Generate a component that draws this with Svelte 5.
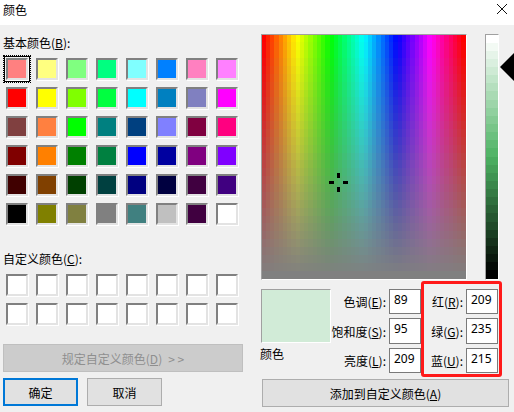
<script>
  import { onMount } from "svelte";

  const basic = [
    "#ff8080", "#ffff80", "#80ff80", "#00ff80", "#80ffff", "#0080ff", "#ff80c0", "#ff80ff",
    "#ff0000", "#ffff00", "#80ff00", "#00ff40", "#00ffff", "#0080c0", "#8080c0", "#ff00ff",
    "#804040", "#ff8040", "#00ff00", "#008080", "#004080", "#8080ff", "#800040", "#ff0080",
    "#800000", "#ff8000", "#008000", "#008040", "#0000ff", "#0000a0", "#800080", "#8000ff",
    "#400000", "#804000", "#004000", "#004040", "#000080", "#000040", "#400040", "#400080",
    "#000000", "#808000", "#808040", "#808080", "#408080", "#c0c0c0", "#400040", "#ffffff"
  ];
  const custom = Array(16).fill("#ffffff");
  const hsl = [
    { label: "色调", key: "E", value: 89 },
    { label: "饱和度", key: "S", value: 95 },
    { label: "亮度", key: "L", value: 209 }
  ];
  const rgb = [
    { label: "红", key: "R", value: 209 },
    { label: "绿", key: "G", value: 235 },
    { label: "蓝", key: "U", value: 215 }
  ];

  let spectrum;
  let ramp;

  function hslColor(h, s, l) {
    return `hsl(${h} ${s}% ${l}%)`;
  }

  onMount(() => {
    // spectrum, blocky like the real dialog
    const ctx = spectrum.getContext("2d");
    const cols = 48;
    const rows = 31;
    for (let c = 0; c < cols; c++) {
      for (let r = 0; r < rows; r++) {
        ctx.fillStyle = hslColor((c / (cols - 1)) * 360, 100 - (r / (rows - 1)) * 100, 50);
        const x = Math.floor((c * spectrum.width) / cols);
        const y = Math.floor((r * spectrum.height) / rows);
        ctx.fillRect(x, y, spectrum.width, spectrum.height);
      }
    }

    // luminance ramp for the current hue and saturation
    const rctx = ramp.getContext("2d");
    const steps = 30;
    for (let i = 0; i < steps; i++) {
      rctx.fillStyle = hslColor(133, 40, 100 - (i / (steps - 1)) * 100);
      rctx.fillRect(0, Math.floor((i * ramp.height) / steps), ramp.width, ramp.height);
    }
  });
</script>

<div class="dialog">
  <header class="titlebar">
    <span>颜色</span>
    <svg class="close" width="12" height="12" viewBox="0 0 12 12">
      <path d="M1 1 L11 11 M11 1 L1 11" stroke="#111" stroke-width="1" fill="none" />
    </svg>
  </header>

  <div class="content">
    <section class="left">
      <p class="caption">基本颜色(<u>B</u>):</p>
      <div class="grid">
        {#each basic as color, i}
          <div class="cell" class:active={i === 0}>
            <div class="swatch" style="background: {color}"></div>
          </div>
        {/each}
      </div>

      <p class="caption custom-caption">自定义颜色(<u>C</u>):</p>
      <div class="grid custom">
        {#each custom as color}
          <div class="cell">
            <div class="swatch" style="background: {color}"></div>
          </div>
        {/each}
      </div>

      <button class="btn define" disabled>规定自定义颜色(<u>D</u>)<span class="more">&gt; &gt;</span></button>
      <div class="actions">
        <button class="btn primary">确定</button>
        <button class="btn">取消</button>
      </div>
    </section>

    <section class="right">
      <div class="pickers">
        <div class="spectrum">
          <canvas bind:this={spectrum} width="204" height="244"></canvas>
          <div class="cross">
            <i class="v t"></i><i class="v b"></i><i class="h l"></i><i class="h r"></i>
          </div>
        </div>
        <div class="ramp">
          <canvas bind:this={ramp} width="12" height="244"></canvas>
        </div>
        <div class="arrow"></div>
      </div>

      <div class="values">
        <div class="preview-col">
          <div class="preview"></div>
          <span class="preview-label">颜色</span>
        </div>
        <div class="fields">
          {#each hsl as f}
            <label class="field">
              <span>{f.label}(<u>{f.key}</u>):</span>
              <span class="input">{f.value}</span>
            </label>
          {/each}
        </div>
        <div class="fields rgb">
          {#each rgb as f}
            <label class="field">
              <span>{f.label}(<u>{f.key}</u>):</span>
              <span class="input">{f.value}</span>
            </label>
          {/each}
        </div>
      </div>

      <button class="btn add">添加到自定义颜色(<u>A</u>)</button>
    </section>
  </div>
</div>

<style>
  :global(body) {
    margin: 0;
    background: #f0f0f0;
  }

  .dialog {
    width: 514px;
    height: 412px;
    overflow: hidden;
    background: #f0f0f0;
    color: #000;
    font-family: "Noto Sans CJK SC", "Noto Sans", sans-serif;
    font-size: 12px;
  }

  .titlebar {
    height: 25px;
    box-sizing: border-box;
    background: #fff;
    display: flex;
    align-items: flex-start;
    justify-content: space-between;
    padding: 0 6px 0 3px;
    line-height: 20px;
  }

  .close {
    margin-top: 3px;
  }

  .content {
    display: flex;
    height: 387px;
  }

  .left {
    width: 261px;
    flex: none;
    padding: 0 0 0 3px;
    box-sizing: border-box;
  }

  .caption {
    margin: 0;
    height: 18px;
    line-height: 18px;
    padding-top: 9px;
    box-sizing: content-box;
  }

  .grid {
    display: grid;
    grid-template-columns: repeat(8, 22px);
    grid-auto-rows: 22px;
    column-gap: 8px;
    row-gap: 7px;
    margin: 6px 0 0 3px;
  }

  .custom-caption {
    padding-top: 0;
    margin-top: 25px;
  }

  .custom {
    margin-top: 6px;
  }

  .cell {
    position: relative;
    width: 22px;
    height: 22px;
  }

  .swatch {
    width: 22px;
    height: 22px;
    box-sizing: border-box;
    border: 2px solid;
    border-color: #808080 #e3e3e3 #e3e3e3 #808080;
    box-shadow: 1px 1px 0 #fff;
  }

  .active::before {
    content: "";
    position: absolute;
    inset: -3px;
    border: 1px dotted #000;
  }

  .active::after {
    content: "";
    position: absolute;
    inset: -2px;
    border: 1px solid #000;
  }

  .btn {
    font: inherit;
    color: #000;
    background: #e1e1e1;
    border: 1px solid #adadad;
    padding: 0;
    height: 28px;
    box-sizing: border-box;
  }

  .define {
    display: block;
    width: 240px;
    margin-top: 19px;
    background: #cccccc;
    border-color: #bfbfbf;
    color: #8f8f8f;
  }

  .more {
    margin-left: 6px;
  }

  .actions {
    display: flex;
    gap: 9px;
    margin-top: 6px;
  }

  .actions .btn {
    width: 75px;
  }

  .primary {
    border: 2px solid #0078d7;
  }

  .right {
    flex: 1;
    position: relative;
    min-width: 0;
  }

  .pickers {
    display: flex;
    padding-top: 9px;
    position: relative;
  }

  .spectrum {
    position: relative;
    width: 206px;
    height: 246px;
    box-sizing: border-box;
    border: 1px solid;
    border-color: #a0a0a0 #fff #fff #a0a0a0;
  }

  canvas {
    display: block;
  }

  .cross {
    position: absolute;
    left: 67px;
    top: 138px;
    width: 19px;
    height: 19px;
  }

  .cross i {
    position: absolute;
    background: #000;
  }

  .cross .v {
    left: 8px;
    width: 3px;
    height: 5px;
  }

  .cross .t { top: 0; }
  .cross .b { bottom: 0; }

  .cross .h {
    top: 8px;
    width: 5px;
    height: 3px;
  }

  .cross .l { left: 0; }
  .cross .r { right: 0; }

  .ramp {
    margin-left: 18px;
    width: 14px;
    height: 246px;
    box-sizing: border-box;
    border: 1px solid;
    border-color: #a0a0a0 #fff #fff #a0a0a0;
  }

  .arrow {
    position: absolute;
    left: 239px;
    top: 28px;
    width: 0;
    height: 0;
    border-style: solid;
    border-width: 14px 14px 14px 0;
    border-color: transparent #000 transparent transparent;
  }

  .values {
    display: flex;
    margin-top: 9px;
    height: 90px;
    position: relative;
  }

  .preview-col {
    width: 70px;
    flex: none;
  }

  .preview {
    width: 70px;
    height: 54px;
    box-sizing: border-box;
    background: #d1ebd7;
    border: 1px solid;
    border-color: #a0a0a0 #fff #fff #a0a0a0;
  }

  .preview-label {
    display: block;
    line-height: 18px;
    margin-top: 2px;
    margin-left: -1px;
  }

  .fields {
    display: flex;
    flex-direction: column;
    gap: 4px;
    width: 90px;
    flex: none;
  }

  .fields.rgb {
    width: 77px;
    margin-left: 0;
    position: relative;
  }

  .fields.rgb::before {
    content: "";
    position: absolute;
    left: 0;
    right: -4px;
    top: -8px;
    height: 96px;
    box-sizing: border-box;
    border: 3px solid #ff1a1a;
    border-radius: 3px;
    pointer-events: none;
  }

  .field {
    display: flex;
    align-items: center;
    justify-content: flex-end;
    gap: 3px;
    height: 25px;
    white-space: nowrap;
  }

  .field:nth-child(2) {
    height: 26px;
  }

  .input {
    width: 32px;
    height: 100%;
    flex: none;
    box-sizing: border-box;
    background: #fff;
    border: 1px solid #7a7a7a;
    line-height: 19px;
    padding-left: 4px;
    font-family: "Noto Sans", sans-serif;
    font-size: 12px;
  }

  .add {
    display: block;
    width: 247px;
    margin: 0 0 0 1px;
  }
</style>
